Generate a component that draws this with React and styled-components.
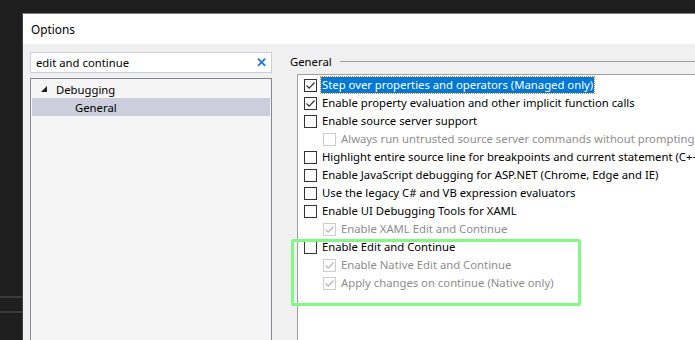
import React from "react";
import styled, { createGlobalStyle } from "styled-components";

const Global = createGlobalStyle`
  html, body { margin: 0; padding: 0; background: #1e1e1e; }
  body { font-family: "Noto Sans", "Open Sans", sans-serif; font-size: 11.3px; color: #000; }
`;

const Screen = styled.div`
  position: relative;
  width: 695px;
  height: 340px;
  overflow: hidden;
  display: flex;
  background: #1e1e1e;
`;

const Backdrop = styled.div`
  width: 22px;
  flex: none;
  display: flex;
  flex-direction: column;
  padding-top: 296px;
  gap: 13px;
`;

const BackLine = styled.div`
  height: 2px;
  background: #3a3a3a;
`;

const Dialog = styled.div`
  margin-top: 13px;
  width: 720px;
  flex: none;
  border-top: 1px solid #7a7a7a;
  border-left: 1px solid #3f3f3f;
  background: #f0f0f0;
  display: flex;
  flex-direction: column;
`;

const TitleBar = styled.div`
  height: 30px;
  background: #fff;
  display: flex;
  align-items: center;
  padding-left: 8px;
  font-size: 11.8px;
`;

const Body = styled.div`
  display: flex;
  padding: 8px 0 0 7px;
  gap: 18px;
  flex: 1;
  min-height: 0;
`;

const LeftCol = styled.div`
  width: 242px;
  flex: none;
  display: flex;
  flex-direction: column;
  gap: 5px;
`;

const Search = styled.div`
  height: 19px;
  border: 1px solid #cccedb;
  background: #fff;
  display: flex;
  align-items: center;
  padding: 0 4px 0 5px;
  justify-content: space-between;
`;

const ClearX = styled.span`
  color: #1e7bd4;
  font-size: 13px;
  font-weight: 700;
  line-height: 1;
`;

const Tree = styled.div`
  flex: 1;
  border: 1px solid #828790;
  border-bottom: none;
  background: #f5f5f5;
  padding: 1px 1px 0 1px;
`;

const TreeRow = styled.div`
  height: 18px;
  display: flex;
  align-items: center;
  padding-left: ${(p) => p.$indent}px;
  background: ${(p) => (p.$selected ? "#cccedb" : "transparent")};
`;

const Arrow = styled.svg`
  width: 6px;
  height: 6px;
  margin-right: 9px;
`;

const RightCol = styled.div`
  flex: 1;
  min-width: 0;
  display: flex;
  flex-direction: column;
`;

const GroupHeader = styled.div`
  height: 18px;
  display: flex;
  align-items: center;
  gap: 8px;
`;

const Rule = styled.div`
  flex: 1;
  height: 1px;
  background: #a0a0a0;
`;

const ListBox = styled.div`
  margin: 4px 0 0 7px;
  flex: 1;
  min-width: 0;
  overflow: hidden;
  background: #fff;
  border-top: 1px solid #a0a0a0;
  border-left: 1px solid #a0a0a0;
  padding: 1px 0 0 6px;
  display: flex;
  flex-direction: column;
`;

const OptRow = styled.div`
  height: 18px;
  flex: none;
  display: flex;
  align-items: center;
  padding-left: ${(p) => (p.$sub ? 19 : 0)}px;
  white-space: nowrap;
`;

const Box = styled.span`
  width: 11px;
  height: 11px;
  flex: none;
  border: 1px solid ${(p) => (p.$disabled ? "#cccccc" : "#333333")};
  background: #fff;
  display: flex;
  align-items: center;
  justify-content: center;
  margin-right: 4px;
`;

const Label = styled.span`
  padding: 0 1px;
  line-height: 16px;
  color: ${(p) => (p.$disabled ? "#8d8d8d" : "#000")};
  background: ${(p) => (p.$focused ? "#0078d7" : "transparent")};
  ${(p) => (p.$focused ? "color: #fff; outline: 1px dotted #e0861e; outline-offset: 0;" : "")}
`;

const Highlight = styled.div`
  position: absolute;
  left: 291px;
  top: 239px;
  width: 284px;
  height: 61px;
  border: 3px solid #84f884;
  border-radius: 2px;
  pointer-events: none;
`;

const Check = ({ color }) => (
  <svg width="11" height="11" viewBox="0 0 11 11">
    <path d="M1.5 5.5 L4.2 8.2 L9.5 2.5" fill="none" stroke={color} strokeWidth="1.2" />
  </svg>
);

const Option = ({ text, checked, disabled, sub, focused }) => (
  <OptRow $sub={sub}>
    <Box $disabled={disabled}>
      {checked && <Check color={disabled ? "#b4b4b4" : "#333"} />}
    </Box>
    <Label $disabled={disabled} $focused={focused}>
      {text}
    </Label>
  </OptRow>
);

const options = [
  { text: "Step over properties and operators (Managed only)", checked: true, focused: true },
  { text: "Enable property evaluation and other implicit function calls", checked: true },
  { text: "Enable source server support" },
  { text: "Always run untrusted source server commands without prompting", sub: true, disabled: true },
  { text: "Highlight entire source line for breakpoints and current statement (C++ only)" },
  { text: "Enable JavaScript debugging for ASP.NET (Chrome, Edge and IE)" },
  { text: "Use the legacy C# and VB expression evaluators" },
  { text: "Enable UI Debugging Tools for XAML" },
  { text: "Enable XAML Edit and Continue", sub: true, disabled: true, checked: true },
  { text: "Enable Edit and Continue" },
  { text: "Enable Native Edit and Continue", sub: true, disabled: true, checked: true },
  { text: "Apply changes on continue (Native only)", sub: true, disabled: true, checked: true },
];

export default function App() {
  return (
    <>
      <Global />
      <Screen>
        <Backdrop>
          <BackLine />
          <BackLine />
        </Backdrop>
        <Dialog>
          <TitleBar>Options</TitleBar>
          <Body>
            <LeftCol>
              <Search>
                <span>edit and continue</span>
                <ClearX>✕</ClearX>
              </Search>
              <Tree>
                <TreeRow $indent={9}>
                  <Arrow viewBox="0 0 6 6">
                    <polygon points="6,0 6,6 0,6" fill="#1e1e1e" />
                  </Arrow>
                  Debugging
                </TreeRow>
                <TreeRow $indent={43} $selected>
                  General
                </TreeRow>
              </Tree>
            </LeftCol>
            <RightCol>
              <GroupHeader>
                <span>General</span>
                <Rule />
              </GroupHeader>
              <ListBox>
                {options.map((o) => (
                  <Option key={o.text} {...o} />
                ))}
              </ListBox>
            </RightCol>
          </Body>
        </Dialog>
        <Highlight />
      </Screen>
    </>
  );
}
